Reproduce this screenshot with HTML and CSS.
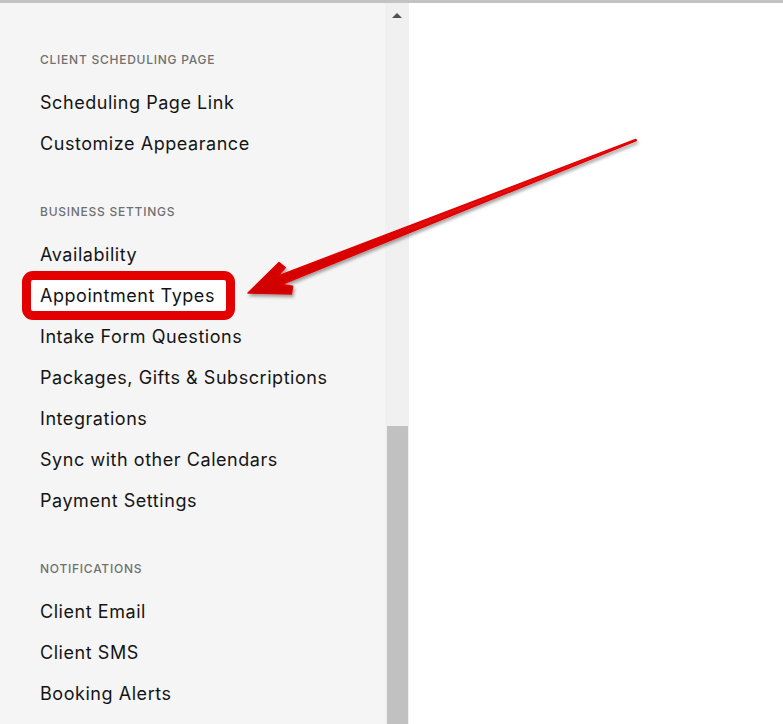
FILE: index.html
```html
<!DOCTYPE html>
<html lang="en">
<head>
<meta charset="utf-8">
<title>Settings</title>
<link rel="stylesheet" href="styles.css">
</head>
<body>
<div class="page">
  <aside class="sidebar">
    <section class="group">
      <h3 class="group-title">Client Scheduling Page</h3>
      <a class="item">Scheduling Page Link</a>
      <a class="item">Customize Appearance</a>
    </section>
    <section class="group">
      <h3 class="group-title">Business Settings</h3>
      <a class="item">Availability</a>
      <a class="item"><span class="highlight">Appointment Types</span></a>
      <a class="item">Intake Form Questions</a>
      <a class="item">Packages, Gifts &amp; Subscriptions</a>
      <a class="item">Integrations</a>
      <a class="item">Sync with other Calendars</a>
      <a class="item">Payment Settings</a>
    </section>
    <section class="group">
      <h3 class="group-title">Notifications</h3>
      <a class="item">Client Email</a>
      <a class="item">Client SMS</a>
      <a class="item">Booking Alerts</a>
    </section>
  </aside>
  <div class="scrollbar">
    <div class="scroll-up"></div>
    <div class="scroll-track"></div>
    <div class="scroll-thumb"></div>
  </div>
  <main class="content"></main>
</div>
<svg class="annotation" width="783" height="724" viewBox="0 0 783 724" aria-hidden="true">
  <defs>
    <filter id="shadow" x="-10%" y="-10%" width="120%" height="120%">
      <feDropShadow dx="1.5" dy="2.5" stdDeviation="1.5" flood-color="#000" flood-opacity="0.35"/>
    </filter>
    <linearGradient id="redgrad" x1="0" y1="0" x2="0" y2="1">
      <stop offset="0" stop-color="#f01010"/>
      <stop offset="1" stop-color="#d00000"/>
    </linearGradient>
  </defs>
  <polygon filter="url(#shadow)" fill="url(#redgrad)" stroke="#e00000" stroke-width="1.5" stroke-linejoin="round"
    points="248,293 291.4,294.1 292.6,286.2 281.4,284.5 636.3,140.6 635.7,139.4 277.6,276.2 285.2,267.5 279,262.5"/>
</svg>
</body>
</html>
```

FILE: styles.css
```css
html, body {
  margin: 0;
  padding: 0;
  background: #ffffff;
}

body {
  font-family: Inter, "Liberation Sans", sans-serif;
  color: #1a1a1a;
  overflow: hidden;
}

.page {
  display: flex;
  height: 724px;
  box-sizing: border-box;
  border-top: 3px solid #c3c3c3;
}

.sidebar {
  width: 385px;
  flex: none;
  background: #f5f5f5;
  box-sizing: border-box;
  padding: 49px 0 0 40px;
  overflow: hidden;
}

.group {
  display: flex;
  flex-direction: column;
  align-items: flex-start;
  margin-bottom: 40px;
}

.group-title {
  margin: 0 0 14px 0;
  font-size: 12px;
  line-height: 16px;
  font-weight: 500;
  text-transform: uppercase;
  letter-spacing: 0.75px;
  color: #707070;
}

.item {
  display: block;
  height: 41px;
  line-height: 41px;
  font-size: 18px;
  font-weight: 400;
  letter-spacing: 0.55px;
  color: #141414;
  white-space: nowrap;
}

.highlight {
  display: inline-block;
  line-height: 31px;
  padding: 0 11px 0 9px;
  margin-left: -9px;
  background: #ffffff;
  outline: 9px solid #e20000;
  border-radius: 2px;
}

.scrollbar {
  width: 24px;
  flex: none;
  background: #f0f0f0;
  display: flex;
  flex-direction: column;
  align-items: center;
}

.scroll-up {
  width: 0;
  height: 0;
  margin-top: 10px;
  border-left: 5px solid transparent;
  border-right: 5px solid transparent;
  border-bottom: 5px solid #505050;
}

.scroll-track {
  flex: 1;
}

.scroll-thumb {
  width: 21px;
  height: 298px;
  background: #c1c1c1;
}

.content {
  flex: 1;
  background: #ffffff;
}

.annotation {
  position: absolute;
  left: 0;
  top: 0;
  pointer-events: none;
}
```
